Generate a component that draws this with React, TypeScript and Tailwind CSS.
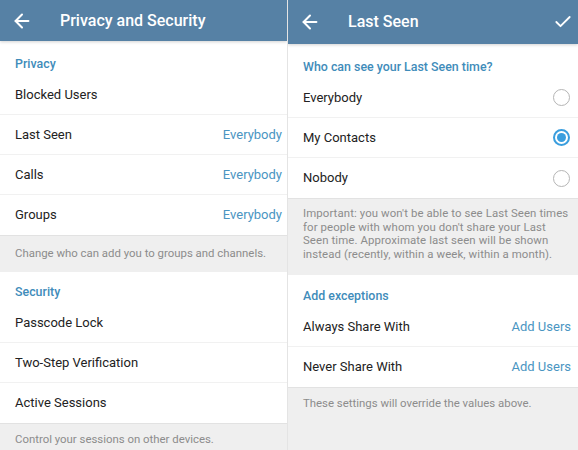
import { ArrowLeft, Check } from "lucide-react"

type Row = { label: string; value?: string }

function Header({ title, check, h }: { title: string; check?: boolean; h: string }) {
  return (
    <div className={`relative z-10 flex ${h} shrink-0 items-center bg-[#5681a5] shadow-[0_1px_3px_rgba(0,0,0,0.18)] text-white`}>
      <ArrowLeft className="ml-[11px] h-[22px] w-[22px]" strokeWidth={2.2} />
      <div className="ml-[27px] text-[16px] font-medium">{title}</div>
      {check && <Check className="ml-auto mr-[5px] h-[20px] w-[20px]" strokeWidth={2.2} />}
    </div>
  )
}

function SectionLabel({ text, className }: { text: string; className?: string }) {
  return (
    <div className={`flex items-end px-[15px] pb-[3px] text-[12.4px] font-medium leading-[16px] text-[#3f8cba] ${className ?? ""}`}>
      {text}
    </div>
  )
}

function Radio({ checked }: { checked?: boolean }) {
  return checked ? (
    <div className="flex h-[17px] w-[17px] items-center justify-center rounded-full border-2 border-[#3a9ede]">
      <div className="h-[9px] w-[9px] rounded-full bg-[#3a9ede]" />
    </div>
  ) : (
    <div className="h-[17px] w-[17px] rounded-full border-[1.5px] border-[#b5b5b5]" />
  )
}

function Footer({ children, className }: { children: React.ReactNode; className?: string }) {
  return (
    <div className={`bg-[#efefef] px-[15px] text-[11.4px] leading-[13.7px] text-[#8c8c8c] ${className ?? ""}`}>
      {children}
    </div>
  )
}

function Rows({ rows, pr }: { rows: Row[]; pr: string }) {
  return (
    <div className="bg-white">
      {rows.map((r, i) => (
        <div
          key={r.label}
          className={`flex h-[40px] items-center pl-[15px] ${pr} text-[13px] text-[#222] ${
            i < rows.length - 1 ? "border-b border-[#f1f1f1]" : ""
          }`}
        >
          <span>{r.label}</span>
          {r.value && <span className="ml-auto text-[#4a95c2]">{r.value}</span>}
        </div>
      ))}
    </div>
  )
}

export default function App() {
  return (
    <div className="grid h-[450px] w-[578px] grid-cols-[288px_290px] overflow-hidden bg-white font-['Roboto',sans-serif]">
      {/* left: privacy and security */}
      <div className="flex h-[450px] flex-col overflow-hidden border-r border-[#e4e4e4]">
        <Header title="Privacy and Security" h="h-[41px]" />
        <SectionLabel text="Privacy" className="h-[34px] bg-white" />
        <Rows
          pr="pr-[5px]"
          rows={[
            { label: "Blocked Users" },
            { label: "Last Seen", value: "Everybody" },
            { label: "Calls", value: "Everybody" },
            { label: "Groups", value: "Everybody" },
          ]}
        />
        <Footer className="flex h-[37px] items-center border-t border-[#e2e2e2]">
          Change who can add you to groups and channels.
        </Footer>
        <SectionLabel text="Security" className="h-[31px] bg-white" />
        <Rows
          pr="pr-[5px]"
          rows={[{ label: "Passcode Lock" }, { label: "Two-Step Verification" }, { label: "Active Sessions" }]}
        />
        <Footer className="flex-1 border-t border-[#e2e2e2] pt-[9px]">Control your sessions on other devices.</Footer>
      </div>

      {/* right: last seen */}
      <div className="flex h-[450px] flex-col overflow-hidden">
        <Header title="Last Seen" check h="h-[44px]" />
        <SectionLabel text="Who can see your Last Seen time?" className="h-[34px] bg-white" />
        <div className="bg-white">
          {[
            { label: "Everybody", checked: false },
            { label: "My Contacts", checked: true },
            { label: "Nobody", checked: false },
          ].map((r, i) => (
            <div
              key={r.label}
              className={`flex h-[40px] items-center pl-[15px] pr-[8px] text-[13px] text-[#222] ${
                i < 2 ? "border-b border-[#f1f1f1]" : ""
              }`}
            >
              <span>{r.label}</span>
              <span className="ml-auto">
                <Radio checked={r.checked} />
              </span>
            </div>
          ))}
        </div>
        <Footer className="h-[77px] whitespace-nowrap border-t border-[#e2e2e2] pr-[4px] pt-[8px] tracking-[0.1px]">
          Important: you won't be able to see Last Seen times
          <br />
          for people with whom you don't share your Last
          <br />
          Seen time. Approximate last seen will be shown
          <br />
          instead (recently, within a week, within a month).
        </Footer>
        <SectionLabel text="Add exceptions" className="h-[32px] bg-white" />
        <Rows
          pr="pr-[7px]"
          rows={[
            { label: "Always Share With", value: "Add Users" },
            { label: "Never Share With", value: "Add Users" },
          ]}
        />
        <Footer className="flex-1 border-t border-[#e2e2e2] pt-[9px]">These settings will override the values above.</Footer>
      </div>
    </div>
  )
}
